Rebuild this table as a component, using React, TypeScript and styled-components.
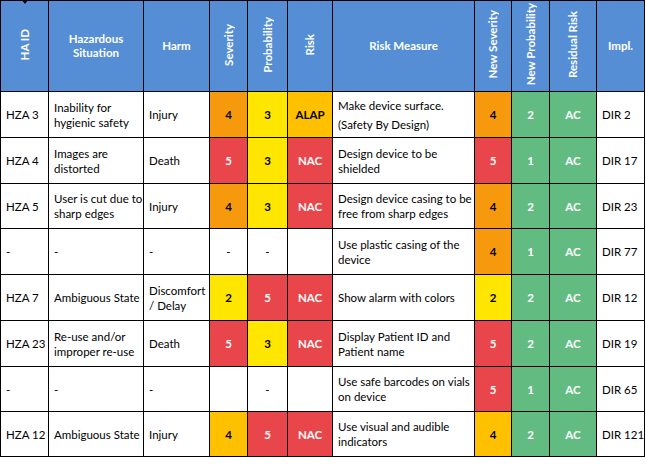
import React from "react";
import styled, { createGlobalStyle } from "styled-components";

const Global = createGlobalStyle`
  html, body { margin: 0; padding: 0; background: #ffffff; }
  body { font-family: Lato, "Liberation Sans", Arial, sans-serif; }
`;

type Tone = "orange" | "yellow" | "amber" | "red" | "green" | "none";

const toneBg: Record<Tone, string> = {
  orange: "#F7990C",
  yellow: "#FFE600",
  amber: "#FFC000",
  red: "#E8464A",
  green: "#62BC81",
  none: "#ffffff",
};
const toneFg: Record<Tone, string> = {
  orange: "#000000",
  yellow: "#000000",
  amber: "#000000",
  red: "#ffffff",
  green: "#ffffff",
  none: "#000000",
};

const Wrap = styled.div`
  position: relative;
  width: 646px;
`;

const Marker = styled.div`
  position: absolute;
  left: 22px;
  top: 0;
  width: 0;
  height: 0;
  border-left: 3px solid transparent;
  border-right: 3px solid transparent;
  border-top: 4px solid #000;
`;

const Table = styled.table`
  border-collapse: collapse;
  table-layout: fixed;
  width: 645px;
  font-size: 11.5px;
  color: #000;
`;

const HeadRow = styled.tr`
  height: 91px;
`;

const Row = styled.tr<{ $h: number }>`
  height: ${(p) => p.$h}px;
`;

const HeadCell = styled.th`
  background: #558ED5;
  color: #ffffff;
  font-weight: 700;
  font-size: 11.5px;
  line-height: 14px;
  text-align: center;
  vertical-align: middle;
  border: 1px solid #000;
  padding: 0 2px;
  overflow: hidden;
`;

const Vertical = styled.span`
  display: inline-block;
  writing-mode: vertical-rl;
  transform: rotate(180deg);
  white-space: nowrap;
`;

const TextCell = styled.td`
  border: 1px solid #000;
  padding: 0 2px 0 5px;
  vertical-align: middle;
  text-align: left;
  line-height: 15px;
  white-space: nowrap;
  overflow: hidden;
`;

const ScoreCell = styled.td<{ $tone: Tone; $plain?: boolean }>`
  border: 1px solid #000;
  padding: 0;
  text-align: center;
  vertical-align: middle;
  background: ${(p) => toneBg[p.$tone]};
  color: ${(p) => toneFg[p.$tone]};
  font-weight: ${(p) => (p.$plain ? 400 : 700)};
`;

const Para = styled.div<{ $lh: number }>`
  line-height: ${(p) => p.$lh}px;
`;

type Score = { v: string; t: Tone; plain?: boolean };

type RowData = {
  id: string;
  hazard: string[];
  harm: string[];
  sev: Score;
  prob: Score;
  risk: Score;
  measure: string[];
  measureLh?: number;
  nsev: Score;
  nprob: Score;
  res: Score;
  impl: string;
  h: number;
};

const rows: RowData[] = [
  {
    id: "HZA 3",
    hazard: ["Inability for", "hygienic safety"],
    harm: ["Injury"],
    sev: { v: "4", t: "orange" },
    prob: { v: "3", t: "yellow" },
    risk: { v: "ALAP", t: "amber" },
    measure: ["Make device surface.", "(Safety By Design)"],
    measureLh: 19,
    nsev: { v: "4", t: "orange" },
    nprob: { v: "2", t: "green" },
    res: { v: "AC", t: "green" },
    impl: "DIR 2",
    h: 46,
  },
  {
    id: "HZA 4",
    hazard: ["Images are", "distorted"],
    harm: ["Death"],
    sev: { v: "5", t: "red" },
    prob: { v: "3", t: "yellow" },
    risk: { v: "NAC", t: "red" },
    measure: ["Design device to be", "shielded"],
    nsev: { v: "5", t: "red" },
    nprob: { v: "1", t: "green" },
    res: { v: "AC", t: "green" },
    impl: "DIR 17",
    h: 46,
  },
  {
    id: "HZA 5",
    hazard: ["User is cut due to", "sharp edges"],
    harm: ["Injury"],
    sev: { v: "4", t: "orange" },
    prob: { v: "3", t: "yellow" },
    risk: { v: "NAC", t: "red" },
    measure: ["Design device casing to be", "free from sharp edges"],
    nsev: { v: "4", t: "orange" },
    nprob: { v: "2", t: "green" },
    res: { v: "AC", t: "green" },
    impl: "DIR 23",
    h: 45,
  },
  {
    id: "-",
    hazard: ["-"],
    harm: ["-"],
    sev: { v: "-", t: "none", plain: true },
    prob: { v: "-", t: "none", plain: true },
    risk: { v: "", t: "none" },
    measure: ["Use plastic casing of the", "device"],
    nsev: { v: "4", t: "orange" },
    nprob: { v: "1", t: "green" },
    res: { v: "AC", t: "green" },
    impl: "DIR 77",
    h: 46,
  },
  {
    id: "HZA 7",
    hazard: ["Ambiguous State"],
    harm: ["Discomfort", "/ Delay"],
    sev: { v: "2", t: "yellow" },
    prob: { v: "5", t: "red" },
    risk: { v: "NAC", t: "red" },
    measure: ["Show alarm with colors"],
    nsev: { v: "2", t: "yellow" },
    nprob: { v: "2", t: "green" },
    res: { v: "AC", t: "green" },
    impl: "DIR 12",
    h: 46,
  },
  {
    id: "HZA 23",
    hazard: ["Re-use and/or", "improper re-use"],
    harm: ["Death"],
    sev: { v: "5", t: "red" },
    prob: { v: "3", t: "yellow" },
    risk: { v: "NAC", t: "red" },
    measure: ["Display Patient ID and", "Patient name"],
    nsev: { v: "5", t: "red" },
    nprob: { v: "2", t: "green" },
    res: { v: "AC", t: "green" },
    impl: "DIR 19",
    h: 46,
  },
  {
    id: "-",
    hazard: ["-"],
    harm: ["-"],
    sev: { v: "", t: "none" },
    prob: { v: "-", t: "none", plain: true },
    risk: { v: "", t: "none" },
    measure: ["Use safe barcodes on vials", "on device"],
    nsev: { v: "5", t: "red" },
    nprob: { v: "1", t: "green" },
    res: { v: "AC", t: "green" },
    impl: "DIR 65",
    h: 45,
  },
  {
    id: "HZA 12",
    hazard: ["Ambiguous State"],
    harm: ["Injury"],
    sev: { v: "4", t: "amber" },
    prob: { v: "5", t: "red" },
    risk: { v: "NAC", t: "red" },
    measure: ["Use visual and audible", "indicators"],
    nsev: { v: "4", t: "amber" },
    nprob: { v: "2", t: "green" },
    res: { v: "AC", t: "green" },
    impl: "DIR 121",
    h: 45,
  },
];

const widths = [48, 95, 66, 38, 40, 45, 142, 37, 38, 47, 48];

const Lines: React.FC<{ lines: string[]; lh?: number }> = ({ lines, lh = 15 }) => (
  <>
    {lines.map((l, i) => (
      <Para key={i} $lh={lh}>
        {l}
      </Para>
    ))}
  </>
);

const ScoreTd: React.FC<{ s: Score }> = ({ s }) => (
  <ScoreCell $tone={s.t} $plain={s.plain}>
    {s.v}
  </ScoreCell>
);

export default function App() {
  return (
    <Wrap>
      <Global />
      <Table>
        <colgroup>
          {widths.map((w, i) => (
            <col key={i} style={{ width: w }} />
          ))}
        </colgroup>
        <thead>
          <HeadRow>
            <HeadCell>
              <Vertical>HA ID</Vertical>
            </HeadCell>
            <HeadCell>
              Hazardous
              <br />
              Situation
            </HeadCell>
            <HeadCell>Harm</HeadCell>
            <HeadCell>
              <Vertical>Severity</Vertical>
            </HeadCell>
            <HeadCell>
              <Vertical>Probability</Vertical>
            </HeadCell>
            <HeadCell>
              <Vertical>Risk</Vertical>
            </HeadCell>
            <HeadCell>Risk Measure</HeadCell>
            <HeadCell>
              <Vertical>New Severity</Vertical>
            </HeadCell>
            <HeadCell>
              <Vertical>New Probability</Vertical>
            </HeadCell>
            <HeadCell>
              <Vertical>Residual Risk</Vertical>
            </HeadCell>
            <HeadCell>Impl.</HeadCell>
          </HeadRow>
        </thead>
        <tbody>
          {rows.map((r, i) => (
            <Row key={i} $h={r.h}>
              <TextCell>{r.id}</TextCell>
              <TextCell>
                <Lines lines={r.hazard} />
              </TextCell>
              <TextCell>
                <Lines lines={r.harm} />
              </TextCell>
              <ScoreTd s={r.sev} />
              <ScoreTd s={r.prob} />
              <ScoreTd s={r.risk} />
              <TextCell>
                <Lines lines={r.measure} lh={r.measureLh} />
              </TextCell>
              <ScoreTd s={r.nsev} />
              <ScoreTd s={r.nprob} />
              <ScoreTd s={r.res} />
              <TextCell>{r.impl}</TextCell>
            </Row>
          ))}
        </tbody>
      </Table>
      <Marker />
    </Wrap>
  );
}
